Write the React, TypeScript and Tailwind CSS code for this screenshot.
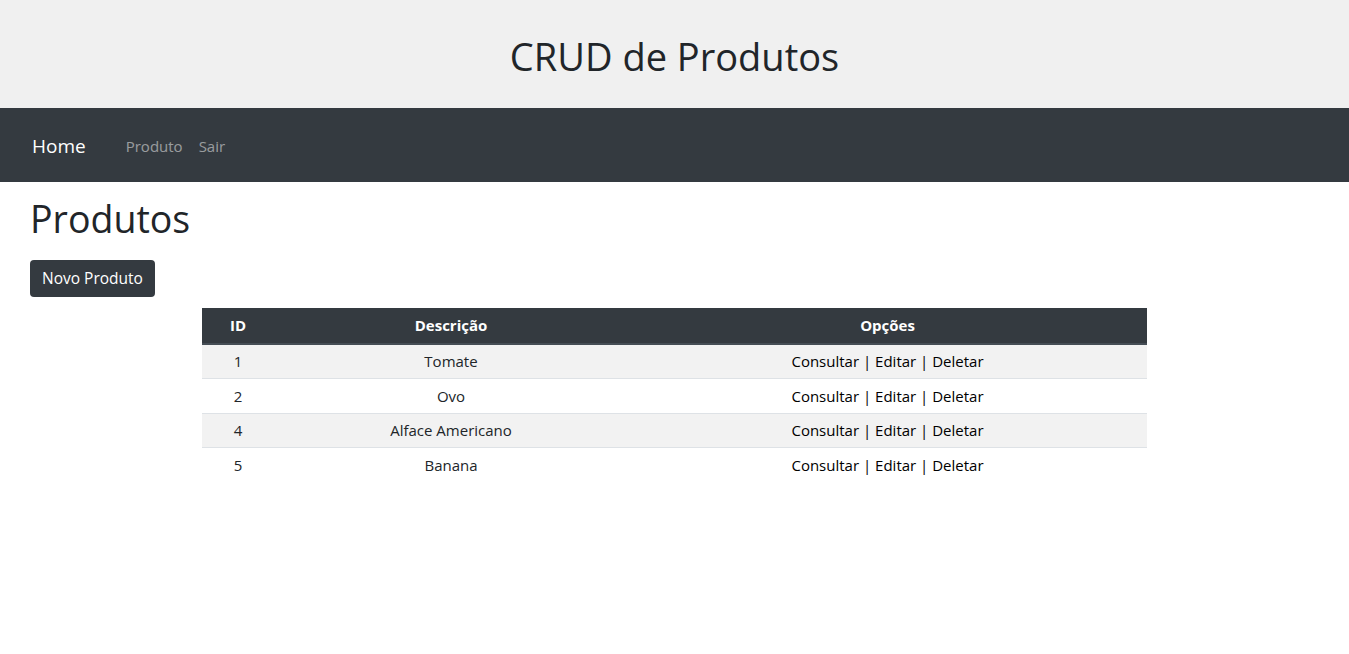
const rows = [
  { id: 1, descricao: "Tomate" },
  { id: 2, descricao: "Ovo" },
  { id: 4, descricao: "Alface Americano" },
  { id: 5, descricao: "Banana" },
];

export default function App() {
  return (
    <div className="min-h-screen bg-white text-[#212529] font-['Segoe_UI','Open_Sans',sans-serif] text-[15px]">
      <header className="h-[108px] bg-[#f0f0f0] flex items-center justify-center pt-[5px]">
        <h1 className="text-[38px] leading-[1.2] font-normal">CRUD de Produtos</h1>
      </header>
      <nav className="h-[74px] bg-[#343a40] flex items-center px-8 pt-[3px]">
        <a className="text-[19px] text-white mr-[40px]">Home</a>
        <a className="text-[15px] text-white/50 mr-4">Produto</a>
        <a className="text-[15px] text-white/50">Sair</a>
      </nav>
      <main className="px-[30px]">
        <h2 className="text-[37.5px] leading-[1.2] mt-[14px] mb-[19px]">Produtos</h2>
        <button className="bg-[#343a40] text-white rounded px-3 h-[37px] text-[15.5px]">
          Novo Produto
        </button>
        <div className="flex justify-center mt-[11px]">
          <table className="w-[945px] text-center border-collapse">
            <thead>
              <tr className="bg-[#343a40] text-white h-[36px] border-b-2 border-[#454d55]">
                <th className="w-[72px] font-bold">ID</th>
                <th className="w-[354px] font-bold">Descrição</th>
                <th className="font-bold">Opções</th>
              </tr>
            </thead>
            <tbody>
              {rows.map((r, i) => (
                <tr
                  key={r.id}
                  className={`h-[34.5px] border-t border-[#dee2e6] ${i % 2 === 0 ? "bg-[#f2f2f2]" : "bg-white"}`}
                >
                  <td>{r.id}</td>
                  <td>{r.descricao}</td>
                  <td className="text-black">Consultar | Editar | Deletar</td>
                </tr>
              ))}
            </tbody>
          </table>
        </div>
      </main>
    </div>
  );
}
